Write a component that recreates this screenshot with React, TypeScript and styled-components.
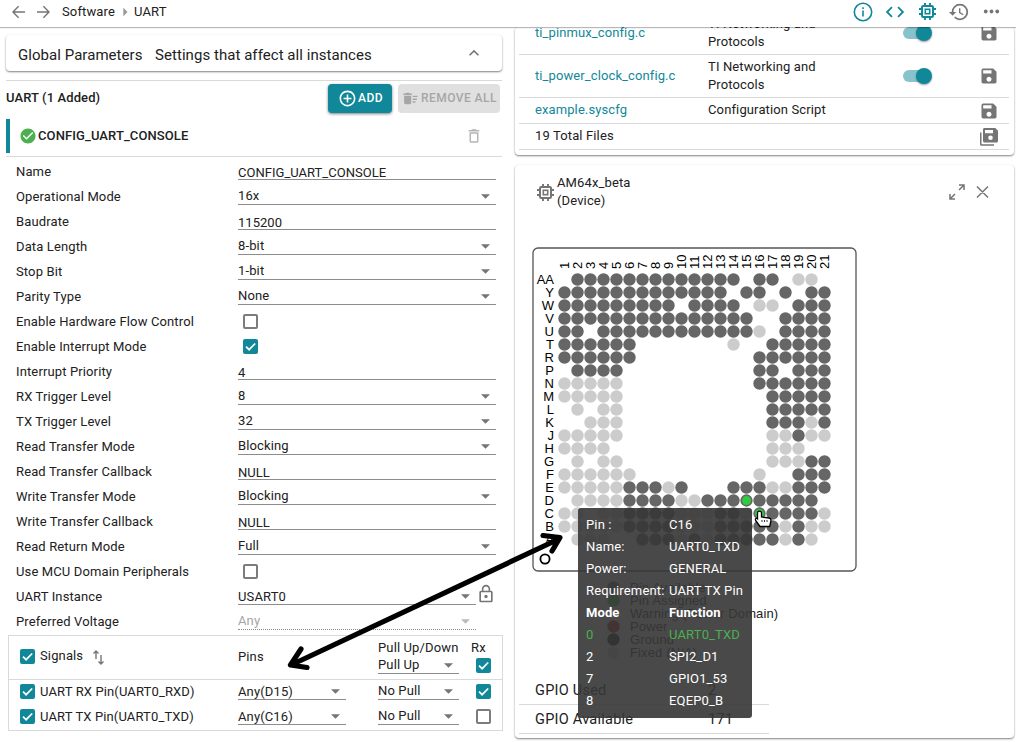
import React from 'react';
import styled, { createGlobalStyle, css } from 'styled-components';
import {
  MdAddCircleOutline, MdArrowRight, MdCheckCircle, MdCode, MdDeleteOutline, MdDeleteSweep,
  MdHistory, MdKeyboardArrowUp, MdLockOutline, MdMoreHoriz, MdSave,
} from 'react-icons/md';

const teal = '#118899';
const grey = '#757575';
const line = '#d9d9d9';

const Global = createGlobalStyle`
  html, body { margin: 0; height: 742px; overflow: hidden; background: #fff; }
  body { font-family: Roboto, "Liberation Sans", sans-serif; font-size: 13px; letter-spacing: 0.13px; color: #212121; }
  * { box-sizing: border-box; }
  svg { display: block; flex: none; }
`;

const Screen = styled.div`
  position: relative;
  width: 1016px;
  height: 742px;
  display: flex;
  flex-direction: column;
  overflow: hidden;
`;

const TopBar = styled.header`
  height: 27px;
  flex: none;
  display: flex;
  align-items: center;
  justify-content: space-between;
  padding: 0 9px 4px 10px;
  color: ${grey};
  background: #fff;
  box-shadow: 0 1px 1px rgba(0, 0, 0, 0.28);
  z-index: 2;
`;

const Crumbs = styled.div`
  display: flex;
  align-items: center;
  height: 23px;
`;

const Crumb = styled.span<{ $first?: boolean }>`
  margin-left: ${p => (p.$first ? 9 : -1)}px;
  color: #212121;
`;

const Tools = styled.div`
  display: grid;
  grid-template-columns: repeat(5, 32px);
  place-items: center;
  height: 23px;
`;

const Body = styled.div`
  flex: 1;
  min-height: 0;
  display: flex;
`;

const Left = styled.main`
  width: 515px;
  flex: none;
  padding: 8px 12px 0 6px;
`;

const GlobalCard = styled.section`
  height: 36px;
  display: flex;
  align-items: center;
  padding: 3px 18px 0 12px;
  width: 496px;
  border-radius: 4px;
  font-size: 15px;
  letter-spacing: 0.05px;
  box-shadow: 0 1px 2px rgba(0, 0, 0, 0.5);
  span { flex: 1; margin-left: 12.5px; }
  svg { margin-top: -4px; }
`;

const ModuleHead = styled.div`
  display: flex;
  align-items: flex-start;
  margin-top: 9px;
  padding-top: 3px;
  width: 496px;
  height: 39px;
  border-top: 1px solid ${line};
  h2 { flex: 1; margin: 6px 0 0; font-size: 13px; line-height: 16px; font-weight: 500; letter-spacing: 0.1px; }
`;

const Button = styled.button<{ $off?: boolean }>`
  display: flex;
  align-items: center;
  height: 29px;
  border: 0;
  border-radius: 4px;
  font: 500 12px Roboto, sans-serif;
  letter-spacing: 0.45px;
  white-space: nowrap;
  width: 64px;
  padding: 0 0 1px 10px;
  gap: 1px;
  color: #fff;
  background: ${teal};
  box-shadow: 0 1px 3px rgba(0, 0, 0, 0.5);
  ${p => p.$off && css`
    width: 102px;
    margin: 0 2px 0 6px;
    padding-left: 4px;
    gap: 2px;
    color: #a6a6a6;
    background: #e0e0e0;
    box-shadow: none;
  `}
`;

const InstanceHead = styled.div`
  display: flex;
  align-items: center;
  width: 496px;
  height: 38px;
  padding-bottom: 3px;
  border-bottom: 1px solid ${line};
  font-weight: 500;
  letter-spacing: 0.1px;
  &::before { content: ''; width: 4px; height: 34px; margin-right: 9px; background: ${teal}; }
  span { flex: 1; margin: -2px 0 0 1px; }
  svg:last-child { margin-right: 19px; color: #b5b5b5; }
`;

const Form = styled.div`
  padding: 3px 0 0 10px;
`;

const FieldRow = styled.div`
  display: flex;
  align-items: flex-start;
  height: 25px;
  label { width: 222px; flex: none; line-height: 23px; }
`;

const Value = styled.div<{ $w: number; $low?: boolean; $off?: boolean; $drop?: boolean }>`
  display: flex;
  align-items: center;
  justify-content: space-between;
  width: ${p => p.$w}px;
  height: 20px;
  padding-top: ${p => (p.$low ? 5 : p.$drop ? 4 : 2)}px;
  padding-right: 2px;
  line-height: 15px;
  letter-spacing: ${p => (p.$low ? 0.02 : 0.13)}px;
  color: ${p => (p.$off ? '#a5a5a5' : 'inherit')};
  border-bottom: 1px ${p => (p.$off ? 'dotted' : 'solid')} #8c8c8c;
  svg { margin-top: ${p => (p.$drop ? -2 : 0)}px; color: ${p => (p.$off ? '#bbb' : grey)}; }
`;

const Box = styled.span<{ $on?: boolean }>`
  display: flex;
  width: 15px;
  height: 15px;
  flex: none;
  border-radius: 2px;
  border: ${p => (p.$on ? '0' : '2px solid #7c7c7c')};
  background: ${p => (p.$on ? teal : '#fff')};
`;

const BoxCell = styled.div<{ $tight?: boolean }>`
  padding: ${p => (p.$tight ? 1 : 4)}px 5px 0;
`;

const Signals = styled.section`
  width: 495px;
  height: 96px;
  margin: 0 0 0 2px;
  border: 1px solid ${line};
`;

const SignalRow = styled.div<{ $head?: boolean }>`
  display: grid;
  grid-template-columns: 229px 140px 93px 1fr;
  height: ${p => (p.$head ? 44 : 25)}px;
  border-bottom: ${p => (p.$head ? `1px solid ${line}` : '0')};
`;

const SignalName = styled.div<{ $head?: boolean }>`
  display: flex;
  align-items: center;
  padding: 0 0 0 11px;
  height: ${p => (p.$head ? 41 : 23)}px;
  gap: 5px;
`;

const SignalTitle = styled.span`
  margin: -2px 4px 0 0;
`;

const PinsTitle = styled.div`
  line-height: 41px;
`;

const Stack = styled.div`
  padding-top: 3px;
  line-height: 18px;
  white-space: nowrap;
`;

const PullSelect = styled.div`
  margin-top: -3px;
`;

const Right = styled.aside`
  width: 500px;
  flex: none;
  display: flex;
  flex-direction: column;
`;

const Card = styled.section<{ $h: number }>`
  height: ${p => p.$h}px;
  flex: none;
  border-radius: 4px;
  box-shadow: 0 1px 2px rgba(0, 0, 0, 0.5);
  width: 499px;
`;

const FilesCard = styled(Card)`
  display: flex;
  flex-direction: column;
  justify-content: flex-end;
  padding: 0 5px 5px 4px;
  margin-bottom: 10px;
`;

const FileRow = styled.div<{ $h: number; $up?: boolean }>`
  display: grid;
  grid-template-columns: 173px 195px 76px 1fr;
  align-items: center;
  height: ${p => p.$h}px;
  flex: none;
  padding-left: 16px;
  padding-bottom: ${p => (p.$up ? 2 : 0)}px;
  border-bottom: 1px solid ${line};
  line-height: 18px;
  a { color: ${teal}; letter-spacing: 0.1px; }
  p { margin: 0; width: 130px; }
  svg { margin: ${p => (p.$up ? '2px' : '0')} 0 0 0; }
`;

const Toggle = styled.i`
  display: block;
  width: 28px;
  height: 12px;
  border-radius: 6px;
  background: #88c3cc;
  &::after {
    content: '';
    display: block;
    width: 16px;
    height: 16px;
    border-radius: 50%;
    background: ${teal};
    transform: translate(13px, -2px);
    box-shadow: 0 1px 2px rgba(0, 0, 0, 0.4);
  }
`;

const DeviceHead = styled.div`
  display: flex;
  align-items: center;
  height: 54px;
  padding: 0 25px 0 21px;
  line-height: 18px;
  color: ${grey};
  p { flex: 1; margin: 0 0 0 2px; color: #212121; }
`;

const ChipArea = styled.div`
  height: 457px;
  padding: 28px 0 0 17px;
`;

const GpioRow = styled.div`
  display: flex;
  align-items: center;
  width: 250px;
  height: 29px;
  margin-left: 4px;
  padding-left: 16px;
  border-bottom: 1px solid ${line};
  font-size: 14.5px;
  letter-spacing: 0.25px;
  span { width: 173px; }
`;

const Tooltip = styled.div`
  position: absolute;
  left: 578px;
  top: 508px;
  width: 174px;
  height: 210px;
  padding: 6px 8px 0;
  border-radius: 3px;
  background: rgba(55, 55, 55, 0.91);
  color: #fff;
  z-index: 3;
`;

const TipRow = styled.div<{ $bold?: boolean; $green?: boolean }>`
  display: flex;
  line-height: 22px;
  white-space: nowrap;
  letter-spacing: ${p => (p.$bold ? 0.1 : 0.15)}px;
  font-weight: ${p => (p.$bold ? 700 : 400)};
  color: ${p => (p.$green ? '#4caf50' : '#fff')};
  span { width: 83px; flex: none; }
`;

const Overlay = styled.svg`
  position: absolute;
  left: 0;
  top: 0;
  z-index: 4;
  pointer-events: none;
`;

const CheckBox = ({ on }: { on?: boolean }) => (
  <Box $on={on}>
    {on && <svg width="15" height="15" viewBox="0 0 15 15"><path d="M3 7.6 6.1 10.7 12.2 4.5" fill="none" stroke="#fff" strokeWidth="1.7" /></svg>}
  </Box>
);

const Caret = () => (
  <svg width="18" height="16" viewBox="0 0 18 16"><path d="M5 6.2h9L9.5 10.8z" fill="currentColor" /></svg>
);

const ChipIcon = ({ color }: { color: string }) => (
  <svg width="19" height="19" viewBox="0 0 19 19" fill="none" stroke={color}>
    <rect x="4" y="4" width="11" height="11" rx="1.2" strokeWidth="2" />
    <rect x="7.300" y="7.300" width="4.400" height="4.400" strokeWidth="1.600" />
    <path d="M7 1v2.500M12 1v2.500M7 15.500V18M12 15.500V18M1 7h2.500M1 12h2.500M15.500 7H18M15.500 12H18" strokeWidth="1.900" />
  </svg>
);

const Select = ({ value, w = 258, off, drop }: { value: string; w?: number; off?: boolean; drop?: boolean }) => (
  <Value $w={w} $off={off} $drop={drop}>{value}<Caret /></Value>
);

const LockSlot = styled.div`
  margin: -1px 0 0 -0.5px;
`;

type Field = { label: string; kind: 'text' | 'select' | 'check' | 'locked' | 'off'; value?: string; on?: boolean };

const fields: Field[] = [
  { label: 'Name', kind: 'text', value: 'CONFIG_UART_CONSOLE' },
  { label: 'Operational Mode', kind: 'select', value: '16x' },
  { label: 'Baudrate', kind: 'text', value: '115200' },
  { label: 'Data Length', kind: 'select', value: '8-bit' },
  { label: 'Stop Bit', kind: 'select', value: '1-bit' },
  { label: 'Parity Type', kind: 'select', value: 'None' },
  { label: 'Enable Hardware Flow Control', kind: 'check' },
  { label: 'Enable Interrupt Mode', kind: 'check', on: true },
  { label: 'Interrupt Priority', kind: 'text', value: '4' },
  { label: 'RX Trigger Level', kind: 'select', value: '8' },
  { label: 'TX Trigger Level', kind: 'select', value: '32' },
  { label: 'Read Transfer Mode', kind: 'select', value: 'Blocking' },
  { label: 'Read Transfer Callback', kind: 'text', value: 'NULL' },
  { label: 'Write Transfer Mode', kind: 'select', value: 'Blocking' },
  { label: 'Write Transfer Callback', kind: 'text', value: 'NULL' },
  { label: 'Read Return Mode', kind: 'select', value: 'Full' },
  { label: 'Use MCU Domain Peripherals', kind: 'check' },
  { label: 'UART Instance', kind: 'locked', value: 'USART0' },
  { label: 'Preferred Voltage', kind: 'off', value: 'Any' },
];

const FieldControl = ({ f }: { f: Field }) => {
  switch (f.kind) {
    case 'text': return <Value $w={258} $low>{f.value}</Value>;
    case 'select': return <Select value={f.value!} />;
    case 'check': return <BoxCell><CheckBox on={f.on} /></BoxCell>;
    case 'locked': return <><Select value={f.value!} w={238} drop /><LockSlot><MdLockOutline size={20} color={grey} /></LockSlot></>;
    default: return <Select value={f.value!} w={238} off />;
  }
};

/* Ball map of the package: # available, o fixed, g assigned, . no ball */
const balls: [string, string][] = [
  ['AA', '.#############.##.oo.'],
  ['Y', '#############.##.#.##'],
  ['W', '#########.####.oo.###'],
  ['V', '###############..####'],
  ['U', '##.############o.####'],
  ['T', '######.......o..#####'],
  ['R', '######.........######'],
  ['P', '.####..........##.###'],
  ['N', 'ooooo..........######'],
  ['M', 'ooooo...........#####'],
  ['L', '.o.oo...........#####'],
  ['K', '..ooo...........###o#'],
  ['J', 'ooooo...........oo#oo'],
  ['H', 'oooo............ooo..'],
  ['G', '.o.oo...........ooo##'],
  ['F', 'oooooo.........o..###'],
  ['E', 'ooooo###o#...###oo###'],
  ['D', '.oooo####oo###g#####.'],
  ['C', 'oo.oo####ooo##og####o'],
  ['B', 'ooooo####ooo#####o#oo'],
  ['A', '.ooo..###o#o#####o#o.'],
];

const legend: [string, string][] = [
  ['Pin Available', '#666'],
  ['Pin Assigned', '#2ecc40'],
  ['Warning (Power Domain)', '#fff'],
  ['Power', '#b71c1c'],
  ['Ground', '#111'],
  ['Fixed (N/A)', '#ccc'],
];

const ChipDiagram = () => (
  <svg width="330" height="415" viewBox="532 247 330 415" fontFamily='"Liberation Sans", sans-serif' fontSize="13" letterSpacing="0" fill="#000">
    <rect x="533" y="248" width="323" height="323" rx="5" fill="#fff" stroke="#555" strokeWidth="1.3" />
    {Array.from({ length: 21 }, (_, i) => (
      <text key={i} transform={`translate(${569 + i * 13} 269) rotate(-90)`}>{i + 1}</text>
    ))}
    {balls.map(([name, row], r) => {
      const y = 279.5 + r * 13;
      return (
        <g key={name}>
          <text x="554" y={y + 4.5} textAnchor="end">{name}</text>
          {row.split('').map((c, i) => c !== '.' && (
            <circle key={i} cx={564.5 + i * 13} cy={y} r={c === 'g' ? 5.3 : 6.2}
              fill={c === 'o' ? '#ccc' : c === 'g' ? '#2ecc40' : '#666'}
              stroke={c === 'g' ? '#666' : 'none'} strokeWidth="1.7" />
          ))}
        </g>
      );
    })}
    <circle cx="545" cy="559" r="4.6" fill="#fff" stroke="#000" strokeWidth="1.8" />
    {legend.map(([name, color], i) => (
      <g key={name} letterSpacing="0.13">
        <circle cx="613.5" cy={587.5 + i * 13} r="6.2" fill={color} />
        <text x="630" y={592 + i * 13} fill="#222">{name}</text>
      </g>
    ))}
  </svg>
);

const SaveAll = () => (
  <svg width="20" height="20" viewBox="0 0 20 20" fill={grey}>
    <path fillRule="evenodd" d="M5.5 1h10.8L19 3.7v10.4c0 .9-.6 1.5-1.5 1.5h-12c-.9 0-1.5-.6-1.5-1.5V2.5C4 1.6 4.6 1 5.5 1zM6 3v3.2h8V3zM11.5 8.5a2.3 2.3 0 1 0 0 4.6 2.3 2.3 0 0 0 0-4.6z" />
    <path d="M1 5.5h1.5v11.8h12.5v1.5H2.5c-.9 0-1.5-.6-1.5-1.5z" />
  </svg>
);

const App = () => (
  <Screen>
    <Global />
    <TopBar>
      <Crumbs>
        <svg width="43" height="16" viewBox="0 0 43 16" fill="none" stroke={grey} strokeWidth="1.4">
          <path d="M15 8H3M8.6 2.3 3 8l5.6 5.700M27 8h12M33.400 2.300 39 8l-5.600 5.700" />
        </svg>
        <Crumb $first>Software</Crumb>
        <MdArrowRight size={20} color="#999" />
        <Crumb>UART</Crumb>
      </Crumbs>
      <Tools>
        <svg width="20" height="20" viewBox="0 0 20 20" fill="none" stroke={teal} strokeWidth="1.6">
          <circle cx="10" cy="10" r="8.7" /><path d="M10 8.5v6M10 5.2v1.8" />
        </svg>
        <MdCode size={22} color={teal} />
        <ChipIcon color={teal} />
        <MdHistory size={22} />
        <MdMoreHoriz size={23} />
      </Tools>
    </TopBar>
    <Body>
      <Left>
        <GlobalCard>Global Parameters<span>Settings that affect all instances</span><MdKeyboardArrowUp size={20} color={grey} /></GlobalCard>
        <ModuleHead>
          <h2>UART (1 Added)</h2>
          <Button><MdAddCircleOutline size={19} />ADD</Button>
          <Button $off><MdDeleteSweep size={17} />REMOVE ALL</Button>
        </ModuleHead>
        <InstanceHead>
          <MdCheckCircle size={18} color="#4caf50" />
          <span>CONFIG_UART_CONSOLE</span>
          <MdDeleteOutline size={18} />
        </InstanceHead>
        <Form>
          {fields.map(f => <FieldRow key={f.label}><label>{f.label}</label><FieldControl f={f} /></FieldRow>)}
        </Form>
        <Signals>
          <SignalRow $head>
            <SignalName $head>
              <CheckBox on /><SignalTitle>Signals</SignalTitle>
              <svg width="14" height="16" viewBox="0 0 14 16" fill="none" stroke={grey} strokeWidth="1.4">
                <path d="M4 10V2M1.5 4.5 4 2l2.500 2.500M9 6v9M6.500 12.500 9 15l2.500-2.500" />
              </svg>
            </SignalName>
            <PinsTitle>Pins</PinsTitle>
            <Stack>Pull Up/Down<PullSelect><Select value="Pull Up" w={81} /></PullSelect></Stack>
            <Stack>Rx<BoxCell $tight><CheckBox on /></BoxCell></Stack>
          </SignalRow>
          {[['RX', 'D15'], ['TX', 'C16']].map(([dir, pin]) => (
            <SignalRow key={dir}>
              <SignalName><CheckBox on />UART {dir} Pin(UART0_{dir}D)</SignalName>
              <Select value={`Any(${pin})`} w={108} drop />
              <Select value="No Pull" w={81} />
              <BoxCell><CheckBox on={dir === 'RX'} /></BoxCell>
            </SignalRow>
          ))}
        </Signals>
      </Left>
      <Right>
        <FilesCard $h={128}>
          <FileRow $h={43}><a>ti_pinmux_config.c</a><p>TI Networking and Protocols</p><Toggle /><MdSave size={20} color={grey} /></FileRow>
          <FileRow $h={43}><a>ti_power_clock_config.c</a><p>TI Networking and Protocols</p><Toggle /><MdSave size={20} color={grey} /></FileRow>
          <FileRow $h={26} $up><a>example.syscfg</a><p>Configuration Script</p><i /><MdSave size={20} color={grey} /></FileRow>
          <FileRow $h={26} $up><span>19 Total Files</span><i /><i /><SaveAll /></FileRow>
        </FilesCard>
        <Card $h={573}>
          <DeviceHead>
            <ChipIcon color={grey} />
            <p>AM64x_beta<br />(Device)</p>
            <svg width="41" height="18" viewBox="0 0 41 18" fill="none" stroke={grey} strokeWidth="1.5">
              <path d="M2 11v5h5M2.5 15.5 7 11M11 2h5v5M15.5 2.5 11 7M29 3.500l11 11M40 3.500 29 14.500" />
            </svg>
          </DeviceHead>
          <ChipArea><ChipDiagram /></ChipArea>
          <GpioRow><span>GPIO Used</span>2</GpioRow>
          <GpioRow><span>GPIO Available</span>171</GpioRow>
        </Card>
      </Right>
    </Body>
    <Tooltip>
      <TipRow><span>Pin :</span>C16</TipRow>
      <TipRow><span>Name:</span>UART0_TXD</TipRow>
      <TipRow><span>Power:</span>GENERAL</TipRow>
      <TipRow><span>Requirement:</span>UART TX Pin</TipRow>
      <TipRow $bold><span>Mode</span>Function</TipRow>
      <TipRow $green><span>0</span>UART0_TXD</TipRow>
      <TipRow><span>2</span>SPI2_D1</TipRow>
      <TipRow><span>7</span>GPIO1_53</TipRow>
      <TipRow><span>8</span>EQEP0_B</TipRow>
    </Tooltip>
    <Overlay width="1016" height="742" viewBox="0 0 1016 742">
      <g fill="none" stroke="#000" strokeWidth="5.2" strokeLinecap="round" strokeLinejoin="round">
        <path d="M291 665 559 539M301 649 290.5 665 307 667.5M543 535.5 560 537.5 552 551" />
      </g>
      <path d="M757.500 513c0-2.500 4-2.500 4 0v4l7.500 1c1.500.3 2.200 1.200 2 2.500l-1.300 6h-9.700l-4-5.500c-1.500-2 .2-3.500 1.500-2.200z" fill="#fff" stroke="#000" strokeWidth="1.300" />
      <path d="M762 520v2M764.500 520v2M767 520v2" stroke="#000" strokeWidth=".8" />
    </Overlay>
  </Screen>
);

export default App;
